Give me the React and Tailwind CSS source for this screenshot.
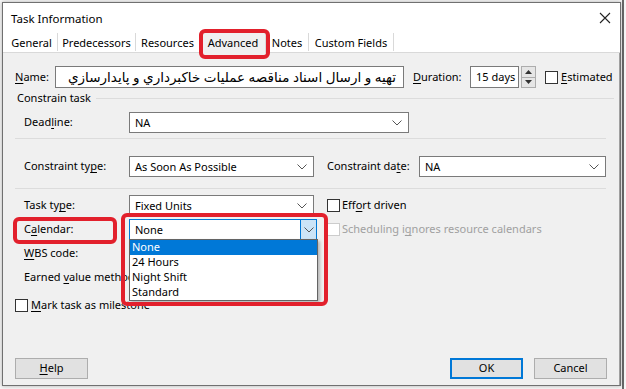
import React from "react";

const Chev = () => (
  <svg width="10" height="6" viewBox="0 0 10 6" className="shrink-0">
    <polyline points="0.5,0.5 5,5 9.5,0.5" fill="none" stroke="#555" strokeWidth="1" />
  </svg>
);

const Select = ({ w, value, active }) => (
  <div className={`${w} h-[21px] flex items-center bg-white border ${active ? "border-[#0078d7]" : "border-[#7a7a7a]"} pl-[5px]`}>
    <span className="flex-1 leading-none">{value}</span>
    {active ? (
      <div className="w-[16px] h-full bg-[#cce4f7] border-l border-[#0078d7] flex items-center justify-center">
        <Chev />
      </div>
    ) : (
      <div className="w-[16px] mr-[3px] flex items-center justify-center">
        <Chev />
      </div>
    )}
  </div>
);

const U = ({ children }) => <span className="underline underline-offset-2">{children}</span>;

const Box = ({ disabled }) => (
  <div className={`w-[13px] h-[13px] shrink-0 bg-white border ${disabled ? "border-[#cccccc]" : "border-[#333]"}`} />
);

const Label = ({ children, w = "w-[106px]" }) => (
  <div className={`${w} shrink-0 pl-[21px] whitespace-nowrap`}>{children}</div>
);

const Tab = ({ children, w }) => (
  <div className={`${w} h-[18px] pt-[3px] flex items-center justify-center border-r border-[#d9d9d9] whitespace-nowrap`}>{children}</div>
);

export default function App() {
  return (
    <div
      className="w-[626px] h-[389px] bg-[#f7f7f7] overflow-hidden relative text-[11px] text-black"
      style={{ fontFamily: '"Noto Sans", "DejaVu Sans", sans-serif' }}
    >
      <div className="absolute right-[2px] top-0 w-[2px] h-full bg-[#6a6a6a]" />
      <div className="relative ml-[2px] mt-[2px] w-[619px] h-[384px] border border-[#707070] bg-[#f0f0f0] flex flex-col shadow-[0_0_4px_rgba(0,0,0,0.3)]">
        {/* title bar */}
        <div className="h-[30px] bg-white flex items-center justify-between pl-[8px] pr-[9px]">
          <span className="text-[11.5px] pt-[1px]">Task Information</span>
          <svg width="12" height="12" viewBox="0 0 12 12">
            <path d="M1 1 L11 11 M11 1 L1 11" stroke="#222" strokeWidth="1.1" />
          </svg>
        </div>
        {/* tabs */}
        <div className="h-[20px] bg-white flex items-end pl-[3px] border-b border-[#d9d9d9]">
          <div className="flex items-center">
            <Tab w="w-[52px]">General</Tab>
            <Tab w="w-[78px]">Predecessors</Tab>
            <Tab w="w-[64px]">Resources</Tab>
            <div className="w-[66px] h-[22px] -mb-[1px] flex items-start justify-center pt-[3px] bg-[#f0f0f0] border border-b-0 border-[#d9d9d9] self-end">
              Advanced
            </div>
            <Tab w="w-[43px]">Notes</Tab>
            <Tab w="w-[85px]">Custom Fields</Tab>
          </div>
        </div>
        {/* panel */}
        <div className="flex-1 flex flex-col border-r border-[#a0a0a0]">
          {/* name row */}
          <div className="h-[22px] mt-[13px] flex items-center pl-[12px]">
            <div className="w-[40px]"><U>N</U>ame:</div>
            <div
              dir="rtl"
              className="w-[349px] h-[22px] bg-white border border-[#7a7a7a] flex items-center pr-[7px] whitespace-nowrap overflow-hidden text-[13.5px]"
            >
              تهیه و ارسال اسناد مناقصه عملیات خاکبرداري و پایدارسازي
            </div>
            <div className="ml-[9px] w-[57px]"><U>D</U>uration:</div>
            <div className="w-[49px] h-[22px] bg-white border border-[#7a7a7a] flex items-center pl-[5px] whitespace-nowrap">15 days</div>
            <div className="ml-[2px] w-[15px] h-[22px] flex flex-col border border-[#adadad] bg-[#e6e6e6]">
              <div className="flex-1 flex items-center justify-center border-b border-[#adadad]">
                <svg width="7" height="4" viewBox="0 0 7 4"><polygon points="3.5,0 7,4 0,4" fill="#333" /></svg>
              </div>
              <div className="flex-1 flex items-center justify-center">
                <svg width="7" height="4" viewBox="0 0 7 4"><polygon points="0,0 7,0 3.5,4" fill="#333" /></svg>
              </div>
            </div>
            <div className="ml-[9px] flex items-center gap-[3px]">
              <Box />
              <span><U>E</U>stimated</span>
            </div>
          </div>
          {/* constrain task */}
          <div className="h-[16px] mt-[2px] flex items-center pl-[14px] pr-[5px] gap-[5px]">
            <span className="whitespace-nowrap">Constrain task</span>
            <div className="flex-1 h-[1px] bg-[#dcdcdc]" />
          </div>
          {/* deadline */}
          <div className="h-[21px] mt-[6px] flex items-center">
            <Label w="w-[126px]">Dead<U>l</U>ine:</Label>
            <Select w="w-[280px]" value="NA" />
          </div>
          <div className="h-[1px] mt-[5px] ml-[12px] mr-[13px] bg-[#dcdcdc]" />
          {/* constraint */}
          <div className="h-[21px] mt-[17px] flex items-center">
            <Label w="w-[126px]">Constraint ty<U>p</U>e:</Label>
            <Select w="w-[185px]" value="As Soon As Possible" />
            <div className="ml-[13px] w-[92px] whitespace-nowrap">Constraint da<U>t</U>e:</div>
            <Select w="w-[187px]" value="NA" />
          </div>
          <div className="h-[1px] mt-[11px] ml-[12px] mr-[13px] bg-[#dcdcdc]" />
          {/* task type */}
          <div className="h-[21px] mt-[6px] flex items-center">
            <Label w="w-[126px]">Task ty<U>p</U>e:</Label>
            <Select w="w-[185px]" value="Fixed Units" />
            <div className="ml-[13px] flex items-center gap-[2px]">
              <Box />
              <span>Eff<U>o</U>rt driven</span>
            </div>
          </div>
          {/* calendar */}
          <div className="h-[21px] mt-[3px] flex items-center">
            <Label w="w-[126px]">C<U>a</U>lendar:</Label>
            <Select w="w-[188px]" value="None" active />
            <div className="ml-[10px] flex items-center gap-[2px] text-[#a0a0a0]">
              <Box disabled />
              <span>Scheduling i<U>g</U>nores resource calendars</span>
            </div>
          </div>
          <div className="h-[16px] mt-[5px] flex items-center">
            <Label><U>W</U>BS code:</Label>
          </div>
          <div className="h-[16px] mt-[8px] flex items-center">
            <Label w="w-[160px]">Earned <U>v</U>alue method:</Label>
          </div>
          <div className="h-[16px] mt-[12px] flex items-center pl-[12px] gap-[3px]">
            <Box />
            <span><U>M</U>ark task as milestone</span>
          </div>
          <div className="flex-1" />
          {/* buttons */}
          <div className="h-[21px] mb-[6px] flex items-center px-[12px]">
            <div className="w-[73px] h-[21px] bg-[#e1e1e1] border border-[#adadad] flex items-center justify-center"><U>H</U>elp</div>
            <div className="flex-1" />
            <div className="w-[73px] h-[21px] bg-[#e1e1e1] border-2 border-[#0078d7] flex items-center justify-center">OK</div>
            <div className="w-[73px] h-[21px] ml-[11px] bg-[#e1e1e1] border border-[#adadad] flex items-center justify-center">Cancel</div>
          </div>
        </div>

        {/* dropdown list overlay */}
        <div className="absolute left-[126px] top-[236px] w-[189px] h-[62px] bg-white border border-[#646464] flex flex-col shadow-[2px_2px_3px_rgba(0,0,0,0.25)]">
          <div className="h-[15px] bg-[#0078d7] text-white pl-[2px] flex items-center">None</div>
          <div className="h-[15px] pl-[2px] flex items-center">24 Hours</div>
          <div className="h-[15px] pl-[2px] flex items-center">Night Shift</div>
          <div className="h-[15px] pl-[2px] flex items-center">Standard</div>
        </div>
      </div>
      {/* red highlight boxes */}
      <div className="absolute left-[199px] top-[29px] w-[71px] h-[30px] border-[4px] border-[#e2202c] rounded-[6px]" />
      <div className="absolute left-[13px] top-[217px] w-[104px] h-[27px] border-[4px] border-[#e2202c] rounded-[6px]" />
      <div className="absolute left-[121px] top-[213px] w-[207px] h-[93px] border-[4px] border-[#e2202c] rounded-[6px]" />
    </div>
  );
}
